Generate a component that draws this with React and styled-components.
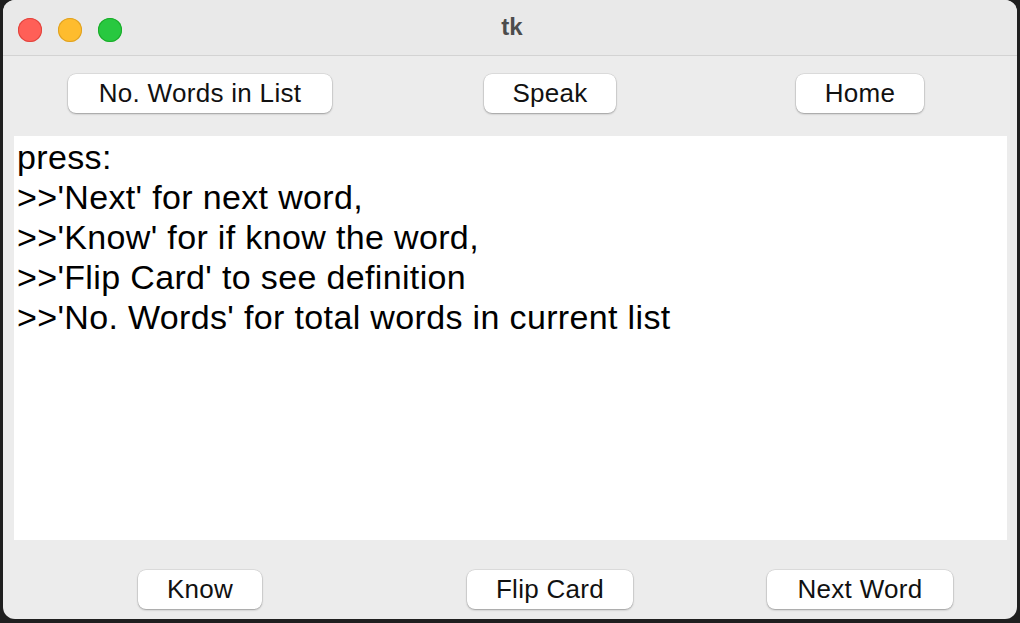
import React from "react";
import styled, { createGlobalStyle } from "styled-components";

const GlobalStyle = createGlobalStyle`
  html, body {
    margin: 0;
    padding: 0;
    background: #1f1f1f;
    font-family: "Liberation Sans", Arial, sans-serif;
  }
`;

const topButtons = ["No. Words in List", "Speak", "Home"];
const bottomButtons = ["Know", "Flip Card", "Next Word"];
const lines = [
  "press:",
  ">>'Next' for next word,",
  ">>'Know' for if know the word,",
  ">>'Flip Card' to see definition",
  ">>'No. Words' for total words in current list",
];

const App = () => {
  return (
    <>
      <GlobalStyle />
      <Window>
        <TitleBar>
          <Lights>
            <Light color="#ff5f57" edge="#e0443e" />
            <Light color="#febc2e" edge="#dea123" />
            <Light color="#28c840" edge="#1aab29" />
          </Lights>
          <Title>tk</Title>
        </TitleBar>
        <Body>
          <ButtonRow>
            {topButtons.map((b, i) => (
              <Cell key={b}>
                <Button w={[264, 132, 128][i]}>{b}</Button>
              </Cell>
            ))}
          </ButtonRow>
          <TextArea>
            {lines.map((l) => (
              <Line key={l}>{l}</Line>
            ))}
          </TextArea>
          <ButtonRow>
            {bottomButtons.map((b, i) => (
              <Cell key={b}>
                <Button w={[124, 166, 186][i]}>{b}</Button>
              </Cell>
            ))}
          </ButtonRow>
        </Body>
      </Window>
    </>
  );
};

const Window = styled.div`
  margin: 0 3px;
  height: 619px;
  background: #ececec;
  border-radius: 12px;
  overflow: hidden;
  display: flex;
  flex-direction: column;
`;

const TitleBar = styled.div`
  position: relative;
  height: 55px;
  border-bottom: 1px solid #d3d3d3;
  background: #e9e9e9;
  display: flex;
  align-items: center;
  justify-content: center;
`;

const Lights = styled.div`
  position: absolute;
  left: 15px;
  top: 18px;
  display: flex;
  gap: 16px;
`;

const Light = styled.span`
  width: 24px;
  height: 24px;
  border-radius: 50%;
  background: ${(p) => p.color};
  box-shadow: inset 0 0 0 1px ${(p) => p.edge};
`;

const Title = styled.div`
  font-weight: bold;
  font-size: 24px;
  color: #4c4c4c;
  margin-left: 4px;
  margin-top: -2px;
`;

const Body = styled.div`
  flex: 1;
  display: flex;
  flex-direction: column;
  padding: 18px 10px 0 11px;
`;

const ButtonRow = styled.div`
  display: grid;
  grid-template-columns: 372px 328px 292px;
  height: 39px;
`;

const Cell = styled.div`
  display: flex;
  justify-content: center;
`;

const Button = styled.div`
  width: ${(p) => p.w}px;
  height: 39px;
  box-sizing: border-box;
  background: #fff;
  border-radius: 8px;
  box-shadow: 0 0 0 0.5px rgba(0, 0, 0, 0.12), 0 1px 2px rgba(0, 0, 0, 0.3);
  display: flex;
  align-items: center;
  justify-content: center;
  font-size: 26px;
  letter-spacing: 0.3px;
  color: #111;
`;

const TextArea = styled.div`
  margin: 23px 0 30px;
  height: 404px;
  background: #fff;
  padding: 1px 3px;
  box-sizing: border-box;
`;

const Line = styled.div`
  font-size: 34px;
  line-height: 40px;
  letter-spacing: 0.35px;
  color: #000;
`;

export default App;
